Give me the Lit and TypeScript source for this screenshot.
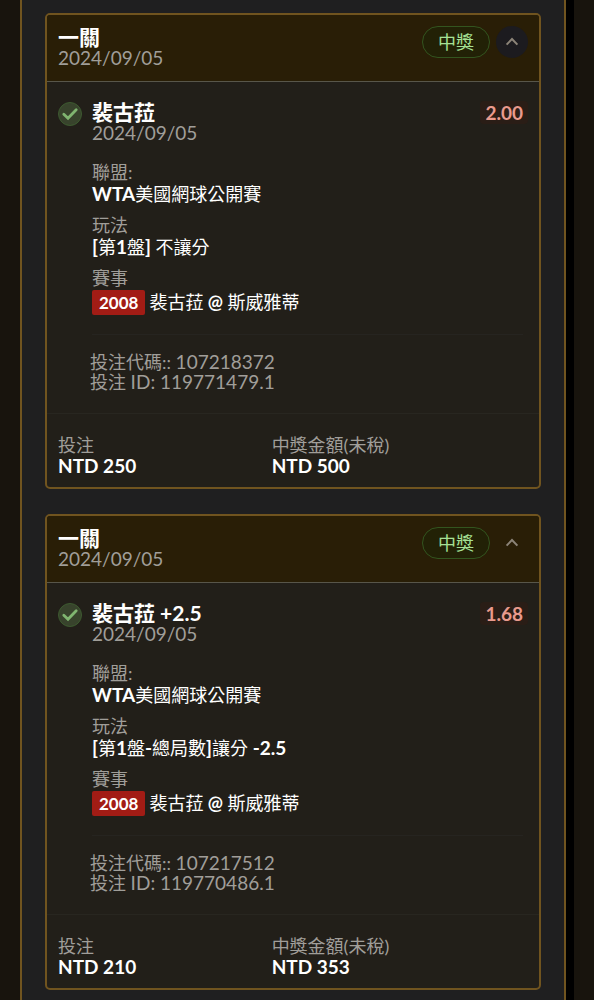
import { LitElement, html, css } from "lit";
import { customElement, property, state } from "lit/decorators.js";
import { classMap } from "lit/directives/class-map.js";

interface Bet {
  parlay: string;
  date: string;
  status: string;
  pick: string;
  handicap: string;
  odds: string;
  league: string;
  market: string;
  matchNo: string;
  match: string;
  code: string;
  id: string;
  stake: string;
  payout: string;
  active: boolean;
}

const BETS: Bet[] = [
  {
    parlay: "一關", date: "2024/09/05", status: "中獎", pick: "裴古菈", handicap: "", odds: "2.00",
    league: "WTA美國網球公開賽", market: "[第1盤] 不讓分", matchNo: "2008", match: "裴古菈 @ 斯威雅蒂",
    code: "107218372", id: "119771479.1", stake: "NTD 250", payout: "NTD 500", active: true,
  },
  {
    parlay: "一關", date: "2024/09/05", status: "中獎", pick: "裴古菈", handicap: "+2.5", odds: "1.68",
    league: "WTA美國網球公開賽", market: "[第1盤-總局數]讓分 -2.5", matchNo: "2008", match: "裴古菈 @ 斯威雅蒂",
    code: "107217512", id: "119770486.1", stake: "NTD 210", payout: "NTD 353", active: false,
  },
];

/* Latin runs are set bold, Chinese runs keep the regular weight. */
const mixed = (text: string) =>
  (text.match(/[\u4e00-\u9fff]+|[^\u4e00-\u9fff]+/g) ?? []).map((run) =>
    /[\u4e00-\u9fff]/.test(run) ? run : html`<span class="latin">${run}</span>`
  );

@customElement("bet-card")
export class BetCard extends LitElement {
  @property({ attribute: false }) bet!: Bet;
  @state() private open = true;

  static styles = css`
    :host {
      display: block;
      border: 2px solid #70541f;
      border-radius: 5px;
      background: #221f19;
      color: #a09e99;
      font-size: 18px;
      line-height: 21px;
      overflow: hidden;
    }
    h2, h3, p, dl, dd { margin: 0; }
    .latin { font-weight: 700; font-size: 19px; }
    .num { font-size: 19px; }
    header {
      display: flex;
      justify-content: space-between;
      align-items: flex-start;
      padding: 11px 11px 13px;
      background: #291e06;
      border-bottom: 1px solid #58564a;
    }
    h2, h3 {
      font-size: 21px;
      line-height: 21px;
      font-weight: 700;
      color: #fff;
    }
    .actions {
      display: flex;
      gap: 6px;
    }
    .status {
      box-sizing: border-box;
      height: 32px;
      padding: 0 15px;
      border: 1px solid #33551f;
      border-radius: 16px;
      background: #222106;
      color: #a6e095;
      line-height: 30px;
    }
    .toggle {
      display: grid;
      place-items: center;
      width: 32px;
      height: 32px;
      padding: 0;
      border: 0;
      border-radius: 50%;
      background: none;
      color: #8c8478;
      cursor: pointer;
    }
    .toggle.active { background: #1c1b1f; }
    .toggle.closed svg { transform: rotate(180deg); }
    .item {
      display: grid;
      grid-template-columns: 24px 1fr auto;
      column-gap: 10px;
      padding: 19px 11px 0;
    }
    .check { margin-top: 1px; }
    .odds {
      align-self: start;
      padding: 1px 5px;
      border-radius: 4px;
      background: #2a1d16;
      color: #e99a8d;
      font-weight: 700;
      font-size: 19px;
    }
    .details {
      grid-column: 2 / 4;
      display: grid;
      row-gap: 10px;
      margin: 19px 5px 0 0;
      padding-bottom: 19px;
      border-bottom: 1px solid #262420;
    }
    .details dd, .totals dd { color: #fff; }
    .details .match {
      display: flex;
      align-items: center;
      gap: 4px;
      margin-top: 1px;
      line-height: 25px;
    }
    .match .latin { font-size: 18px; }
    .tag {
      padding: 0 7px;
      border-radius: 2px;
      background: #a21c15;
      font-size: 17px;
      font-weight: 700;
    }
    .codes {
      padding: 17px 11px 21px 43px;
      border-bottom: 1px solid #282620;
      line-height: 20px;
    }
    .totals {
      display: grid;
      grid-template-columns: 5fr 6fr;
      padding: 21px 11px 11px;
    }
    .totals dd { font-size: 19px; line-height: 20px; }
  `;

  render() {
    const b = this.bet;
    return html`
      <header>
        <div>
          <h2>${b.parlay}</h2>
          <p class="num">${b.date}</p>
        </div>
        <div class="actions">
          <span class="status">${b.status}</span>
          <button
            type="button"
            class=${classMap({ toggle: true, active: b.active, closed: !this.open })}
            aria-label=${b.parlay}
            aria-expanded=${this.open}
            @click=${() => (this.open = !this.open)}
          >
            <svg width="14" height="10" viewBox="0 0 14 10" fill="none" aria-hidden="true">
              <path d="M1.6 7.6L7 2L12.4 7.6" stroke="currentColor" stroke-width="2" />
            </svg>
          </button>
        </div>
      </header>
      ${this.open ? this.renderBody(b) : null}
      <dl class="totals">
        <div><dt>投注</dt><dd>${mixed(b.stake)}</dd></div>
        <div><dt>中獎金額(未稅)</dt><dd>${mixed(b.payout)}</dd></div>
      </dl>
    `;
  }

  private renderBody(b: Bet) {
    return html`
      <section class="item">
        <svg class="check" width="24" height="24" viewBox="0 0 24 24" fill="none" aria-hidden="true">
          <circle cx="12" cy="12" r="11.5" fill="#38432c" stroke="#3d5a30" />
          <path d="M5.8 12.2L10 16.2L18.2 7.8" stroke="#80b570" stroke-width="2.8" stroke-linecap="round" />
        </svg>
        <div>
          <h3>${b.pick} ${b.handicap}</h3>
          <p class="num">${b.date}</p>
        </div>
        <span class="odds">${b.odds}</span>
        <dl class="details">
          <div><dt>聯盟:</dt><dd>${mixed(b.league)}</dd></div>
          <div><dt>玩法</dt><dd>${mixed(b.market)}</dd></div>
          <div>
            <dt>賽事</dt>
            <dd class="match"><span class="tag">${b.matchNo}</span><span>${mixed(b.match)}</span></dd>
          </div>
        </dl>
      </section>
      <div class="codes">
        <p>投注代碼:: <span class="num">${b.code}</span></p>
        <p>投注 <span class="num">ID: ${b.id}</span></p>
      </div>
    `;
  }
}

@customElement("app-root")
export class AppRoot extends LitElement {
  static styles = css`
    :host {
      display: flex;
      box-sizing: border-box;
      min-height: 100vh;
      padding: 0 20px;
      background: #18140d;
      font-family: Lato, "Noto Sans CJK TC", sans-serif;
    }
    main {
      flex: 1;
      display: flex;
      flex-direction: column;
      gap: 25px;
      padding: 13px 23px 10px;
      border: solid #70541f;
      border-width: 0 2px;
      background: #1f1f20;
    }
    .track {
      width: 8px;
      background: #000;
    }
  `;

  render() {
    return html`
      <main>${BETS.map((bet) => html`<bet-card .bet=${bet}></bet-card>`)}</main>
      <div class="track"></div>
    `;
  }
}
